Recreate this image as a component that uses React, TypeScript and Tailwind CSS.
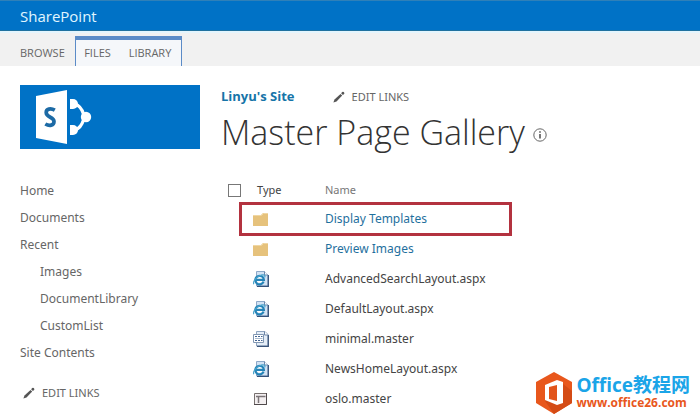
import type { ReactNode } from "react";

type FileKind = "folder" | "page" | "master" | "layout";

const files: { name: string; kind: FileKind }[] = [
  { name: "Display Templates", kind: "folder" },
  { name: "Preview Images", kind: "folder" },
  { name: "AdvancedSearchLayout.aspx", kind: "page" },
  { name: "DefaultLayout.aspx", kind: "page" },
  { name: "minimal.master", kind: "master" },
  { name: "NewsHomeLayout.aspx", kind: "page" },
  { name: "oslo.master", kind: "layout" },
];

const Pencil = () => (
  <svg viewBox="0 0 12 12" className="w-3 h-3 shrink-0 fill-[#555]" aria-hidden="true">
    <path d="M0.4 11.6 1.5 8.6 7.5 2.9 9.2 4.6 3.5 10.5Z" />
    <path d="M8.1 2.2 9.2 1.1Q10 .4 10.7 1.1L11.1 1.5Q11.7 2.2 11.1 2.9L9.9 4Z" />
  </svg>
);

const FileIcon = ({ kind }: { kind: FileKind }) => {
  if (kind === "folder") {
    return (
      <svg viewBox="0 0 16 16" className="w-4 h-4" aria-hidden="true">
        <path d="M0 4H8L10 2H15V15H0Z" fill="#e6c27c" />
        <path d="M0 4.5H8.5L10.5 2.5H15" fill="none" stroke="#f0d7a3" />
      </svg>
    );
  }
  if (kind === "layout") {
    return (
      <svg viewBox="0 0 16 16" className="w-4 h-4" aria-hidden="true">
        <path d="M1.5 2.5H13.5V13.5H1.5Z" fill="#f3eff0" stroke="#77706f" />
        <path d="M3 5.5H12.5M5.5 5.5V12" stroke="#7b7477" strokeWidth="1.5" />
        <path d="M1 13.5H13.5V2" fill="none" stroke="#4f494b" />
      </svg>
    );
  }
  if (kind === "master") {
    return (
      <svg viewBox="0 0 16 16" className="w-4 h-4" aria-hidden="true">
        <path d="M3.5.5H12L15 3.5V15H3.5Z" fill="#e4edf7" stroke="#8ea4c0" />
        <path d="M4 15.3H15.3V4" fill="none" stroke="#3b5479" strokeWidth="1.3" />
        <path d="M11.5.5V4H15" fill="#fff" stroke="#6b84a6" />
        <path d="M.5 3.5H10.5V11.5H.5Z" fill="#fff" stroke="#8197b3" />
        <path d="M2 5.5H9.5M2 9.5H9.5" stroke="#426492" strokeDasharray="2 1" />
        <path d="M2 7.5H9.5" stroke="#a8bbd0" />
      </svg>
    );
  }
  return (
    <svg viewBox="0 0 16 16" className="w-4 h-4" aria-hidden="true">
      <path d="M3.5.5H11.5L15 4V15H3.5Z" fill="#d3e3f4" stroke="#8ea8c8" />
      <path d="M4 15.3H15.3V4" fill="none" stroke="#34517a" strokeWidth="1.3" />
      <path d="M11.5.5V4H15" fill="#fff" stroke="#6b87ac" />
      <circle cx="6.6" cy="8.8" r="3" fill="#fff" />
      <path d="M10.6 10.7A4.3 4.3 0 1 1 10.9 8.9H3.5" fill="none" stroke="#2584b8" strokeWidth="2.2" />
      <path d="M1 13.2C-1 11.2 4.1 4.8 9 3.9 12.3 3.3 12.2 5.2 11.6 6.3" fill="none" stroke="#4aa3cb" strokeWidth="1.2" />
    </svg>
  );
};

const NavLink = ({ children, nested = false }: { children: ReactNode; nested?: boolean }) => (
  <li className={nested ? "pl-5" : ""}>
    <a href="#" className="block h-[27px] leading-[27px]">
      {children}
    </a>
  </li>
);

const EditLinks = () => (
  <button type="button" className="flex items-center gap-[7px] text-[11px] text-[#666]">
    <Pencil />
    EDIT LINKS
  </button>
);

const SiteLogo = () => (
  <a href="#" aria-label="Site home" className="flex h-16 w-full bg-[#0072c6]">
    <svg viewBox="0 0 180 64" className="h-16 w-[180px]" aria-hidden="true">
      <path d="M16 11 47 5V59L16 53Z" fill="#fff" />
      <path
        d="M34.8 25.2C30.5 22.7 26.2 24 26.2 27.5 26.2 33 34 31.5 34 36.5 34 40.5 29.5 41.4 25.3 39"
        fill="none"
        stroke="#1c6aa5"
        strokeWidth="3.7"
      />
      <path d="M55 19Q61 21 63.5 29M63.5 35Q61 43 55 45" fill="none" stroke="#fff" strokeWidth="3.2" />
      <path d="M50 14H53A5 5 0 0 1 53 24H50Z" fill="#fff" />
      <path d="M50 40H53A5 5 0 0 1 53 50H50Z" fill="#fff" />
      <circle cx="66" cy="32" r="5.2" fill="#fff" />
    </svg>
  </a>
);

const Watermark = () => (
  <div className="absolute right-2.5 bottom-1.5 flex items-center gap-[3px]">
    <svg viewBox="0 0 38 42" className="h-[42px] w-[38px]" aria-hidden="true">
      <path d="M19 0 37 10V31L19 42 1 31V10Z" fill="#e8571c" />
      <path d="M10 29 28 12 37 19V31L19 42Z" fill="#d44b15" />
      <path d="M10 13 22 8 28 10V31L22 33 10 28Z" fill="#fff" />
      <path d="M14 15 22 13V29L14 27Z" fill="#e2541b" />
    </svg>
    <div className="flex flex-col font-['Open_Sans','Noto_Sans_CJK_SC',sans-serif] font-bold whitespace-nowrap">
      <span className="text-[19px] leading-5 text-[#1ba5e8]">Office教程网</span>
      <span className="text-xs leading-4 text-[#e8571c]">www.office26.com</span>
    </div>
  </div>
);

const App = () => {
  return (
    <div className="relative min-h-screen overflow-hidden bg-white font-['Noto_Sans','Noto_Sans_CJK_SC',sans-serif] text-xs text-[#666]">
      <header>
        <div className="flex h-[31px] items-center border-t border-b border-t-[#2f80b8] border-b-[#20719f] bg-[#0072c6] px-5 font-['Open_Sans',sans-serif] text-[15px] text-[#e0f6ff]">
          SharePoint
        </div>
        <nav className="flex h-[35px] items-end border-t-2 border-[#e4f5fd] bg-[#f1f1f1] pl-5 font-['Open_Sans',sans-serif] text-[11px]">
          <button type="button" className="h-[26px] w-[55px] text-left">
            BROWSE
          </button>
          <div className="flex h-[30px] border-x border-t-4 border-[#5b8bc7] bg-[#f5f7fa]">
            <button type="button" className="w-[43px]">
              FILES
            </button>
            <button type="button" className="w-[62px]">
              LIBRARY
            </button>
          </div>
        </nav>
      </header>

      <div className="flex gap-[21px] pl-5 pt-[19px]">
        <aside className="w-[180px] shrink-0">
          <SiteLogo />
          <ul className="mt-7">
            <NavLink>Home</NavLink>
            <NavLink>Documents</NavLink>
            <NavLink>Recent</NavLink>
            <NavLink nested>Images</NavLink>
            <NavLink nested>DocumentLibrary</NavLink>
            <NavLink nested>CustomList</NavLink>
            <NavLink>Site Contents</NavLink>
          </ul>
          <div className="mt-5 pl-[3px]">
            <EditLinks />
          </div>
        </aside>

        <main className="min-w-0 flex-1">
          <div className="flex h-6 items-center gap-[38px]">
            <a href="#" className="font-['Open_Sans',sans-serif] text-[13px] font-bold text-[#1674a8]">
              Linyu's Site
            </a>
            <EditLinks />
          </div>
          <div className="flex h-12 items-center gap-2">
            <h1 className="font-['Open_Sans',sans-serif] text-[34px] font-light whitespace-nowrap text-[#333]">
              Master Page Gallery
            </h1>
            <svg viewBox="0 0 14 14" className="mt-1 h-3.5 w-3.5 shrink-0" aria-hidden="true">
              <circle cx="7" cy="7" r="6.2" fill="none" stroke="#666" />
              <path d="M7 6V10.5M7 3.3V4.8" stroke="#555" strokeWidth="1.6" />
            </svg>
          </div>

          <div className="relative mt-[19px]">
            <table className="w-full table-fixed text-left text-[#444]">
              <thead>
                <tr className="h-7 text-[11px]">
                  <th className="w-8 pl-[7px]">
                    <input
                      type="checkbox"
                      aria-label="Select all"
                      className="block h-[13px] w-[13px] appearance-none border border-[#777] bg-white"
                    />
                  </th>
                  <th className="w-[72px] pl-1 font-normal">Type</th>
                  <th className="font-normal text-[#777]">Name</th>
                </tr>
              </thead>
              <tbody>
                {files.map((file) => (
                  <tr key={file.name} className="h-[30px]">
                    <td />
                    <td>
                      <FileIcon kind={file.kind} />
                    </td>
                    <td>
                      <a href="#" className={file.kind === "folder" ? "text-[#1f709e]" : ""}>
                        {file.name}
                      </a>
                    </td>
                  </tr>
                ))}
              </tbody>
            </table>
            {/* Highlight around the first folder */}
            <div className="pointer-events-none absolute top-[26px] left-[18px] h-[34px] w-[273px] border-3 border-[#b3323f]" />
          </div>
        </main>
      </div>

      <Watermark />
    </div>
  );
};

export default App;
